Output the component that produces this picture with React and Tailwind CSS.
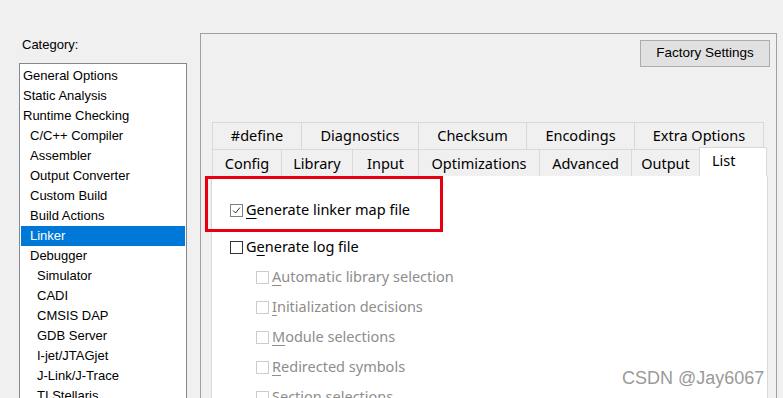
import React from "react";

const tree = [
  ["General Options", 0],
  ["Static Analysis", 0],
  ["Runtime Checking", 0],
  ["C/C++ Compiler", 1],
  ["Assembler", 1],
  ["Output Converter", 1],
  ["Custom Build", 1],
  ["Build Actions", 1],
  ["Linker", 1],
  ["Debugger", 1],
  ["Simulator", 2],
  ["CADI", 2],
  ["CMSIS DAP", 2],
  ["GDB Server", 2],
  ["I-jet/JTAGjet", 2],
  ["J-Link/J-Trace", 2],
  ["TI Stellaris", 2],
];

const row1 = [
  ["#define", 89],
  ["Diagnostics", 117],
  ["Checksum", 108],
  ["Encodings", 108],
  ["Extra Options", 130],
];
const row2 = [
  ["Config", 69],
  ["Library", 71],
  ["Input", 66],
  ["Optimizations", 121],
  ["Advanced", 92],
  ["Output", 68],
];

function Box({ checked, disabled, dark }) {
  return (
    <span
      className={
        "w-[13px] h-[13px] shrink-0 border bg-white flex items-center justify-center " +
        (disabled ? "border-[#cccccc]" : dark ? "border-[#333333]" : "border-[#808080]")
      }
    >
      {checked && (
        <svg width="11" height="11" viewBox="0 0 11 11">
          <polyline points="2,5.5 4.5,8 9,2.5" fill="none" stroke="#333" strokeWidth="1" />
        </svg>
      )}
    </span>
  );
}

function Opt({ u, rest, pre = "", checked, disabled, dark, indent }) {
  return (
    <div className={"flex items-center h-[20px] gap-[3px] " + (indent ? "pl-[44px]" : "pl-[18px]")}>
      <Box checked={checked} disabled={disabled} dark={dark} />
      <span className={"whitespace-nowrap " + (disabled ? "text-[#8d8d8d]" : "text-black")}>
        {pre}
        <span className="underline underline-offset-[3px] decoration-1">{u}</span>
        {rest}
      </span>
    </div>
  );
}

export default function App() {
  return (
    <div className="relative w-[783px] h-[398px] overflow-hidden bg-[#f0f0f0] flex">
      {/* Left column */}
      <div
        className="w-[200px] shrink-0 pl-[19px] pt-[37px] flex flex-col text-[13px] text-black"
        style={{ fontFamily: '"Liberation Sans", Arial, sans-serif' }}
      >
        <div className="ml-[3px] leading-[16px]">Category:</div>
        <div className="mt-[10px] w-[168px] flex-1 border border-[#828790] bg-white px-[1px] pt-[2px]">
          {tree.map(([t, lvl]) => (
            <div
              key={t}
              className={
                "h-[20px] leading-[20px] whitespace-nowrap " +
                (lvl === 0 ? "pl-[2px] " : lvl === 1 ? "pl-[9px] " : "pl-[16px] ") +
                (t === "Linker" ? "bg-[#0078d7] text-white" : "")
              }
            >
              {t}
            </div>
          ))}
        </div>
      </div>

      {/* Right panel */}
      <div className="mt-[33px] w-[577px] shrink-0 border border-b-0 border-[#a0a0a0] flex flex-col">
        <div className="flex justify-end pt-[6px] pr-[6px]">
          <div
            className="w-[130px] h-[27px] bg-[#e1e1e1] border border-[#adadad] flex items-center justify-center text-[13.5px] text-black"
            style={{ fontFamily: '"Liberation Sans", Arial, sans-serif' }}
          >
            Factory Settings
          </div>
        </div>

        <div
          className="mt-[55px] ml-[10px] w-[557px] flex flex-col flex-1 text-[14.5px] text-black"
          style={{ fontFamily: '"Noto Sans", "Open Sans", sans-serif' }}
        >
          <div className="flex pl-[1px] h-[27px]">
            {row1.map(([t, w], i) => (
              <div
                key={t}
                className={
                  "h-[27px] border-t border-l border-[#d9d9d9] flex items-center justify-center leading-none pb-[1px] " +
                  (i === row1.length - 1 ? "border-r" : "")
                }
                style={{ width: w }}
              >
                {t}
              </div>
            ))}
          </div>
          <div className="flex pl-[1px] h-[27px] items-end">
            {row2.map(([t, w]) => (
              <div
                key={t}
                className="h-[27px] border-t border-l border-[#d9d9d9] flex items-center justify-center leading-none"
                style={{ width: w }}
              >
                {t}
              </div>
            ))}
            <div className="relative z-10 -mt-[2px] h-[29px] w-[68px] bg-white border-t border-l border-r border-[#d9d9d9] pl-[12px] pt-[2px] leading-[20px]">
              List
            </div>
          </div>
          <div className="flex-1 bg-white border-l border-r border-[#d9d9d9] pt-[24px] flex flex-col">
            <Opt u="G" rest="enerate linker map file" checked />
            <div className="h-[17px]" />
            <Opt pre="G" u="e" rest="nerate log file" dark />
            <div className="flex flex-col gap-[10px] mt-[10px]">
              <Opt u="A" rest="utomatic library selection" disabled indent />
              <Opt u="I" rest="nitialization decisions" disabled indent />
              <Opt u="M" rest="odule selections" disabled indent />
              <Opt u="R" rest="edirected symbols" disabled indent />
              <Opt u="S" rest="ection selections" disabled indent />
            </div>
          </div>
        </div>
      </div>

      {/* Red annotation box */}
      <div className="absolute left-[205px] top-[176px] w-[238px] h-[56px] border-[3px] border-[#e60012] pointer-events-none" />

      {/* Watermark */}
      <div
        className="absolute left-[622px] top-[366px] text-[18px] leading-[24px] text-[#9a9a9a] whitespace-nowrap"
        style={{ fontFamily: '"Liberation Sans", Arial, sans-serif' }}
      >
        CSDN @Jay6067
      </div>
    </div>
  );
}
